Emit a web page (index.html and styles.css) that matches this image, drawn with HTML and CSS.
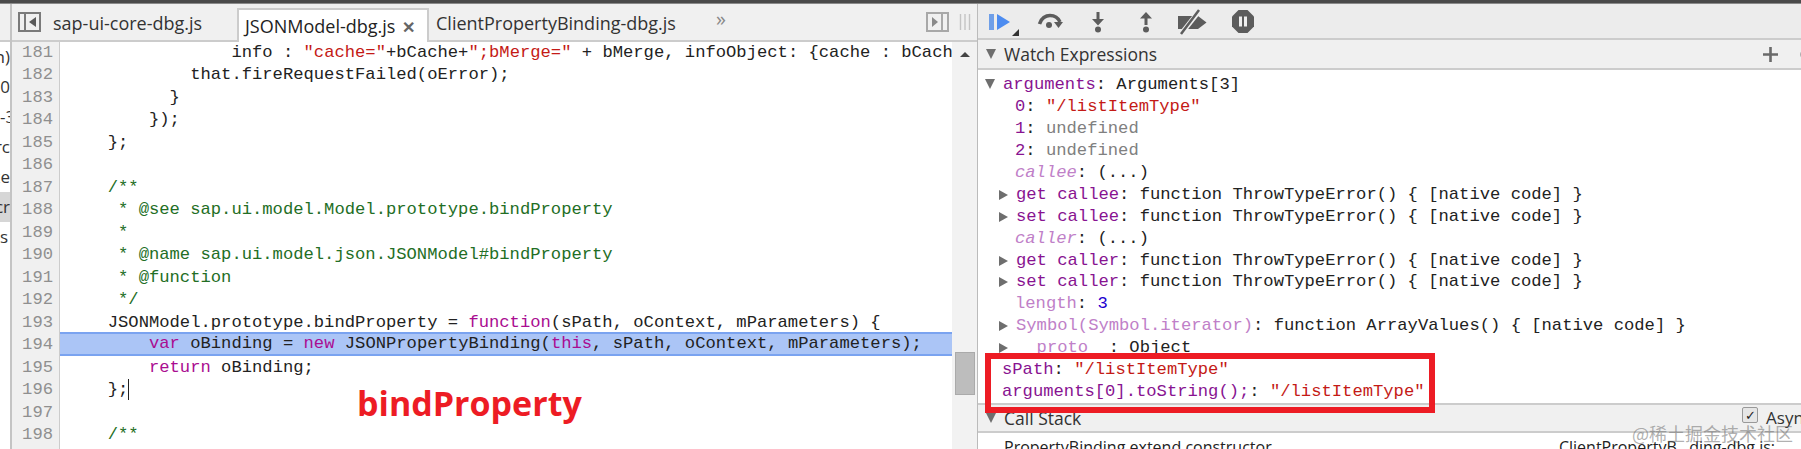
FILE: index.html
```html
<!DOCTYPE html>
<html lang="en">
<head>
<meta charset="utf-8">
<title>DevTools Sources</title>
<link rel="stylesheet" href="styles.css">
</head>
<body>
<div class="topbar"></div>
<div class="app">
  <aside class="nav">
    <div class="nav-head"></div>
    <div class="nav-row">n)</div>
    <div class="nav-row">0</div>
    <div class="nav-row nav-clip">-3</div>
    <div class="nav-row">rc</div>
    <div class="nav-row">xe</div>
    <div class="nav-row nav-sel">cr</div>
    <div class="nav-row nav-start">s</div>
  </aside>
  <main class="editor">
    <div class="tabs">
      <svg class="ic-toggle" width="23" height="20" viewBox="0 0 23 20"><rect x="1" y="1" width="21" height="18" fill="#f0f0f0" stroke="#7a7a7a" stroke-width="2"/><path d="M7 1v18" stroke="#7a7a7a" stroke-width="2"/><path d="M18 5v10l-7-5z" fill="#5a5a5a"/></svg>
      <div class="tab tab-first">sap-ui-core-dbg.js</div>
      <div class="tab tab-active">JSONModel-dbg.js<span class="tab-x">✕</span></div>
      <div class="tab tab-third">ClientPropertyBinding-dbg.js</div>
      <div class="tab-more">»</div>
      <svg class="ic-toggle-r" width="23" height="20" viewBox="0 0 23 20"><rect x="1" y="1" width="21" height="18" fill="#f0f0f0" stroke="#a8a8a8" stroke-width="2"/><path d="M16 1v18" stroke="#a8a8a8" stroke-width="2"/><path d="M6 5v10l6-5z" fill="#8a8a8a"/></svg>
      <svg class="ic-grip" width="12" height="16" viewBox="0 0 12 16"><path d="M1.5 0v16M6 0v16M10.5 0v16" stroke="#c4c4c4" stroke-width="1.4"/></svg>
    </div>
    <div class="code-wrap">
      <div class="gutter">
        <div>181</div><div>182</div><div>183</div><div>184</div><div>185</div><div>186</div><div>187</div><div>188</div><div>189</div><div>190</div><div>191</div><div>192</div><div>193</div><div>194</div><div>195</div><div>196</div><div>197</div><div>198</div>
      </div>
      <div class="code">
        <div class="ln">                info : <span class="s">"cache="</span>+bCache+<span class="s">";bMerge="</span> + bMerge, infoObject: {cache : bCache</div>
        <div class="ln">            that.fireRequestFailed(oError);</div>
        <div class="ln">          }</div>
        <div class="ln">        });</div>
        <div class="ln">    };</div>
        <div class="ln"> </div>
        <div class="ln c">    /**</div>
        <div class="ln c">     * @see sap.ui.model.Model.prototype.bindProperty</div>
        <div class="ln c">     *</div>
        <div class="ln c">     * @name sap.ui.model.json.JSONModel#bindProperty</div>
        <div class="ln c">     * @function</div>
        <div class="ln c">     */</div>
        <div class="ln">    JSONModel.prototype.bindProperty = <span class="k">function</span>(sPath, oContext, mParameters) {</div>
        <div class="ln ln-exec">        <span class="k">var</span> oBinding = <span class="k">new</span> JSONPropertyBinding(<span class="k">this</span>, sPath, oContext, mParameters);</div>
        <div class="ln">        <span class="k">return</span> oBinding;</div>
        <div class="ln">    };<span class="caret"></span></div>
        <div class="ln"> </div>
        <div class="ln c">    /**</div>
      </div>
      <div class="scrollbar">
        <div class="sb-arrow"></div>
        <div class="sb-thumb"></div>
      </div>
      <div class="note">bindProperty</div>
    </div>
  </main>
  <section class="side">
    <div class="dbg">
      <svg class="i-resume" width="31" height="24" viewBox="0 0 31 24"><path d="M0 1h5v16H0z" fill="#6f9fe8"/><path d="M8 1l13 8-13 8z" fill="#4d8cf0"/><path d="M30 16v7h-7z" fill="#333"/></svg>
      <svg class="i-over" width="26" height="17" viewBox="0 0 26 17"><path d="M2.5 11C4 5 9 2.5 13 2.5S21 4.500 23 9" fill="none" stroke="#5c5c5c" stroke-width="3.500"/><path d="M17 9h9l-4.500 6z" fill="#5c5c5c"/><circle cx="12" cy="12" r="3" fill="#5c5c5c"/></svg>
      <svg class="i-in" width="12" height="21" viewBox="0 0 12 21"><path d="M4.500 0h3v7h4.500l-6 6.500-6-6.500h4.500z" fill="#5c5c5c"/><circle cx="6" cy="17.500" r="3" fill="#5c5c5c"/></svg>
      <svg class="i-out" width="12" height="21" viewBox="0 0 12 21"><path d="M6 0l6 6.500H7.500V13h-3V6.500H0z" fill="#5c5c5c"/><circle cx="6" cy="17.500" r="3" fill="#5c5c5c"/></svg>
      <svg class="i-bp" width="29" height="26" viewBox="0 0 29 26"><path d="M0 7h20l8.500 6.500L20 20H0z" fill="#5c5c5c"/><path d="M3 25L22 1" stroke="#eee" stroke-width="5"/><path d="M3 25L21 1" stroke="#5c5c5c" stroke-width="2.500"/></svg>
      <svg class="i-pause" width="22" height="23" viewBox="0 0 22 23"><path d="M6.500 0h9L22 6.500v10L15.500 23h-9L0 16.500v-10z" fill="#5c5c5c"/><path d="M7 6.500h3v10H7zM12 6.500h3v10h-3z" fill="#eee"/></svg>
    </div>
    <div class="pane-head watch-head">
      <span class="tw-open"></span><span class="pane-title">Watch Expressions</span>
      <svg class="i-plus" width="15" height="15" viewBox="0 0 15 15"><path d="M7.500 0v15M0 7.500h15" stroke="#6a6a6a" stroke-width="2.600"/></svg>
      <svg class="i-refresh" width="12" height="17" viewBox="0 0 12 17"><path d="M11 2.500A6 6 0 1 0 11 14.500" fill="none" stroke="#6a6a6a" stroke-width="3"/></svg>
    </div>
    <div class="tree">
      <div class="row r0"><span class="tw-open tree-tw"></span><span class="n">arguments</span>: Arguments[3]</div>
      <div class="row r1"><span class="n">0</span>: <span class="s">"/listItemType"</span></div>
      <div class="row r1"><span class="n">1</span>: <span class="u">undefined</span></div>
      <div class="row r1"><span class="n">2</span>: <span class="u">undefined</span></div>
      <div class="row r1"><span class="f i">callee</span>: (...)</div>
      <div class="row r2"><span class="tw"></span><span class="n">get callee</span>: function ThrowTypeError() { [native code] }</div>
      <div class="row r2"><span class="tw"></span><span class="n">set callee</span>: function ThrowTypeError() { [native code] }</div>
      <div class="row r1"><span class="f i">caller</span>: (...)</div>
      <div class="row r2"><span class="tw"></span><span class="n">get caller</span>: function ThrowTypeError() { [native code] }</div>
      <div class="row r2"><span class="tw"></span><span class="n">set caller</span>: function ThrowTypeError() { [native code] }</div>
      <div class="row r1"><span class="f">length</span>: <span class="num">3</span></div>
      <div class="row r2"><span class="tw"></span><span class="f">Symbol(Symbol.iterator)</span>: function ArrayValues() { [native code] }</div>
      <div class="row r2"><span class="tw"></span><span class="f">__proto__</span>: Object</div>
      <div class="row r3"><span class="n">sPath</span>: <span class="s">"/listItemType"</span></div>
      <div class="row r3"><span class="n">arguments[0].toString();</span>: <span class="s">"/listItemType"</span></div>
    </div>
    <div class="pane-head stack-head">
      <span class="tw-open"></span><span class="pane-title">Call Stack</span>
      <span class="check">✓</span><span class="async">Async</span>
    </div>
    <div class="stack-row"><span>PropertyBinding.extend.constructor</span><span class="stack-file">ClientPropertyB…ding-dbg.js:</span></div>
    <div class="redbox"></div>
    <div class="watermark">@稀土掘金技术社区</div>
  </section>
</div>
</body>
</html>
```
FILE: styles.css
```css
* { box-sizing: border-box; }
html, body { margin: 0; padding: 0; }
body {
  width: 1801px;
  height: 449px;
  overflow: hidden;
  background: #fff;
  font-family: "Open Sans", "Noto Sans", sans-serif;
  color: #222;
}
.topbar { height: 4px; background: #4a4a4a; border-bottom: 1px solid #8a8a8a; }
.app { display: flex; height: 445px; }

/* navigator sliver */
.nav { width: 12px; flex: none; border-right: 2px solid #c4c4c4; overflow: hidden; background: #fff; }
.nav-head { height: 38px; background: #f0f0f0; border-bottom: 2px solid #ccc; }
.nav-row {
  height: 30px;
  line-height: 30px;
  font-size: 17px;
  display: flex;
  justify-content: flex-end;
  white-space: nowrap;
  color: #333;
}
.nav-clip { justify-content: flex-start; }
.nav-start { justify-content: flex-start; }
.nav-sel { background: #d6d6d6; }

/* editor */
.editor { width: 966px; flex: none; display: flex; flex-direction: column; position: relative; border-right: 1px solid #bbb; }
.tabs {
  height: 38px;
  flex: none;
  display: flex;
  align-items: flex-end;
  background: #f0f0f0;
  border-bottom: 2px solid #ccc;
  padding-left: 6px;
  position: relative;
}
.ic-toggle { align-self: flex-start; margin-top: 8px; flex: none; }
.ic-toggle-r { align-self: flex-start; margin-top: 8px; margin-left: 200px; flex: none; }
.ic-grip { align-self: flex-start; margin-top: 10px; margin-left: 10px; flex: none; }
.tab { font-size: 18px; line-height: 32px; height: 33px; white-space: nowrap; flex: none; }
.tab-first { margin-left: 12px; width: 184px; color: #333; }
.tab-active {
  width: 192px;
  padding-left: 6px;
  background: #fff;
  border: 2px solid #ccc;
  border-bottom: 0;
  margin-bottom: -2px;
  height: 34px;
  color: #222;
}
.tab-x { margin-left: 7px; font-size: 16px; font-weight: 700; color: #666; }
.tab-third { margin-left: 7px; width: 280px; color: #333; }
.tab-more { flex: none; align-self: flex-start; line-height: 30px; font-size: 20px; color: #888; }

.code-wrap { flex: 1; display: flex; min-height: 0; position: relative; overflow: hidden; }
.gutter {
  width: 48px;
  flex: none;
  background: #f0f0f0;
  border-right: 1px solid #ccc;
  font: 17.18px/22.47px "Liberation Mono", monospace;
  color: #8f8f8f;
  text-align: right;
  padding-right: 6px;
}
.code {
  flex: 1;
  min-width: 0;
  overflow: hidden;
  font: 17.18px/22.47px "Liberation Mono", monospace;
  color: #222;
}
.ln { height: 22.47px; white-space: pre; padding-left: 6.500px; position: relative; }
.ln-exec {
  background: #abc5f6;
  border-top: 2px solid #7aa3f0;
  border-bottom: 2px solid #7aa3f0;
  line-height: 20px;
  height: 24px;
  margin-top: -2px;
  margin-bottom: 0.470px;
}
.s { color: #c41a16; }
.k { color: #aa0d91; }
.c { color: #236e25; }
.caret { display: inline-block; width: 1px; height: 21px; background: #222; vertical-align: top; }
.scrollbar {
  width: 25px;
  flex: none;
  background: #f2f2f2;
  display: flex;
  flex-direction: column;
  align-items: center;
}
.sb-arrow {
  width: 0;
  height: 0;
  border-left: 5px solid transparent;
  border-right: 5px solid transparent;
  border-bottom: 5px solid #444;
  margin-top: 10px;
}
.sb-thumb { width: 20px; height: 43px; margin-top: 295px; background: #bdbdbd; border: 1px solid #aaa; }
.note {
  position: absolute;
  left: 345px;
  top: 338px;
  font-size: 34px;
  line-height: 46px;
  font-weight: 700;
  color: #ed1c24;
  white-space: nowrap;
}

/* sidebar */
.side { flex: 1; min-width: 0; position: relative; overflow: hidden; display: flex; flex-direction: column; }
.dbg {
  height: 36px;
  flex: none;
  display: flex;
  align-items: flex-start;
  background: #ececec;
  border-bottom: 2px solid #ccc;
}
.i-resume { margin: 9px 0 0 11px; flex: none; }
.i-over { margin: 9px 0 0 17px; flex: none; }
.i-in { margin: 8px 0 0 29px; flex: none; }
.i-out { margin: 8px 0 0 36px; flex: none; }
.i-bp { margin: 5px 0 0 26px; flex: none; }
.i-pause { margin: 6px 0 0 25px; flex: none; }
.pane-head { background: #f0f0f0; display: flex; align-items: center; flex: none; }
.watch-head { height: 30px; border-bottom: 2px solid #ccc; padding-left: 8px; }
.pane-title { font-size: 17.500px; margin-left: 8px; color: #333; white-space: nowrap; }
.tw-open {
  display: inline-block;
  width: 0;
  height: 0;
  border-left: 5.500px solid transparent;
  border-right: 5.500px solid transparent;
  border-top: 10px solid #6e6e6e;
  flex: none;
}
.i-plus { margin-left: auto; margin-right: 19px; flex: none; }
.i-refresh { margin-right: -8px; flex: none; }
.tree { height: 333px; flex: none; font: 17.18px/21.95px "Liberation Mono", monospace; color: #222; padding-top: 4px; overflow: hidden; }
.row { height: 21.95px; white-space: pre; }
.r0 { padding-left: 7px; }
.r1 { padding-left: 37px; }
.r2 { padding-left: 21px; }
.r3 { padding-left: 24px; }
.tree-tw { margin-right: 8px; }
.tw {
  display: inline-block;
  width: 0;
  height: 0;
  border-top: 5.500px solid transparent;
  border-bottom: 5.500px solid transparent;
  border-left: 9px solid #6e6e6e;
  margin-right: 8px;
  vertical-align: -1px;
}
.n { color: #881391; }
.f { color: #c080c8; }
.i { font-style: italic; }
.u { color: #808080; }
.num { color: #1c00cf; }
.stack-head { height: 30px; padding-left: 8px; border-top: 2px solid #ccc; border-bottom: 2px solid #ccc; }
.check {
  margin-left: auto;
  margin-top: -7px;
  width: 16px;
  height: 16px;
  border: 1px solid #999;
  border-radius: 2px;
  background: #e6e6e6;
  font-size: 13px;
  line-height: 14px;
  text-align: center;
  color: #222;
  flex: none;
}
.async { font-size: 17px; margin-left: 8px; margin-right: -11px; margin-top: -2px; flex: none; color: #333; }
.stack-row {
  display: flex;
  justify-content: space-between;
  font-size: 16px;
  line-height: 24px;
  padding: 2px 26px 0 26px;
  white-space: nowrap;
  color: #222;
}
.redbox {
  position: absolute;
  left: 7px;
  top: 349px;
  width: 450px;
  height: 60px;
  border: 6px solid #ed1c24;
}
.watermark {
  position: absolute;
  right: 8px;
  top: 417px;
  font-family: "Noto Sans CJK SC", sans-serif;
  font-size: 18px;
  line-height: 24px;
  color: rgba(110, 110, 110, 0.55);
  white-space: nowrap;
}
```
